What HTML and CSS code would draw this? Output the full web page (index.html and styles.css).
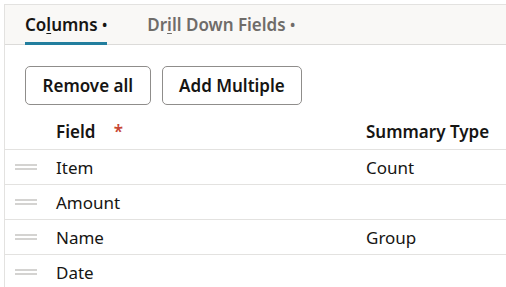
FILE: index.html
```html
<!DOCTYPE html>
<html>
<head>
<meta charset="utf-8">
<link rel="stylesheet" href="styles.css">
</head>
<body>
<div class="panel">
  <div class="tabs">
    <div class="tab active">Co<span class="ak">l</span>umns <span class="dot">•</span></div>
    <div class="tab">Dr<span class="ak">i</span>ll Down Fields <span class="dot">•</span></div>
  </div>
  <div class="toolbar">
    <button class="btn">Remove all</button>
    <button class="btn">Add Multiple</button>
  </div>
  <div class="table">
    <div class="row head">
      <div class="cell"></div>
      <div class="cell">Field <span class="req">*</span></div>
      <div class="cell">Summary Type</div>
    </div>
    <div class="row">
      <div class="cell"><span class="handle"></span></div>
      <div class="cell">Item</div>
      <div class="cell">Count</div>
    </div>
    <div class="row">
      <div class="cell"><span class="handle"></span></div>
      <div class="cell">Amount</div>
      <div class="cell"></div>
    </div>
    <div class="row">
      <div class="cell"><span class="handle"></span></div>
      <div class="cell">Name</div>
      <div class="cell">Group</div>
    </div>
    <div class="row">
      <div class="cell"><span class="handle"></span></div>
      <div class="cell">Date</div>
      <div class="cell"></div>
    </div>
  </div>
</div>
</body>
</html>
```
FILE: styles.css
```css
html, body {
  margin: 0;
  padding: 0;
  background: #ffffff;
}
body {
  font-family: "Noto Sans", "Liberation Sans", sans-serif;
  color: #161513;
  overflow: hidden;
  height: 287px;
}
.panel {
  margin: 4px 0 0 4px;
  border-top: 1px solid #e3e2e0;
  border-left: 1px solid #e3e2e0;
  height: 282px;
  overflow: hidden;
}
.tabs {
  display: flex;
  gap: 40px;
  height: 39px;
  padding-left: 20px;
  background: #f9f8f6;
  border-bottom: 1px solid #dcdbd9;
}
.tab {
  display: flex;
  align-items: center;
  padding-top: 1px;
  font-size: 17px;
  font-weight: 600;
  color: #6f6c69;
  border-bottom: 3px solid transparent;
  margin-bottom: -1px;
  white-space: pre;
}
.tab.active {
  color: #161513;
  border-bottom-color: #227e9e;
}
.ak {
  text-decoration: underline;
  text-underline-offset: 2px;
}
.dot {
  font-size: 14px;
}
.toolbar {
  display: flex;
  gap: 11px;
  padding: 21px 0 0 20px;
}
.btn {
  height: 39px;
  padding: 0 16.5px;
  background: #ffffff;
  border: 1px solid #8f8d8b;
  border-radius: 5px;
  font-family: inherit;
  font-size: 17px;
  font-weight: 600;
  color: #161513;
}
.table {
  margin-top: 9px;
}
.row {
  display: grid;
  grid-template-columns: 51px 310px 1fr;
  height: 34px;
  align-items: center;
  border-bottom: 1px solid #e3e2e0;
  font-size: 17px;
}
.row.head {
  height: 35px;
  font-weight: 600;
}
.req {
  color: #c74634;
  margin-left: 14px;
}
.handle {
  display: block;
  margin-left: 10px;
  width: 22px;
  height: 6px;
  border-top: 2px solid #d4d3d1;
  border-bottom: 2px solid #d4d3d1;
  box-sizing: border-box;
}
```
